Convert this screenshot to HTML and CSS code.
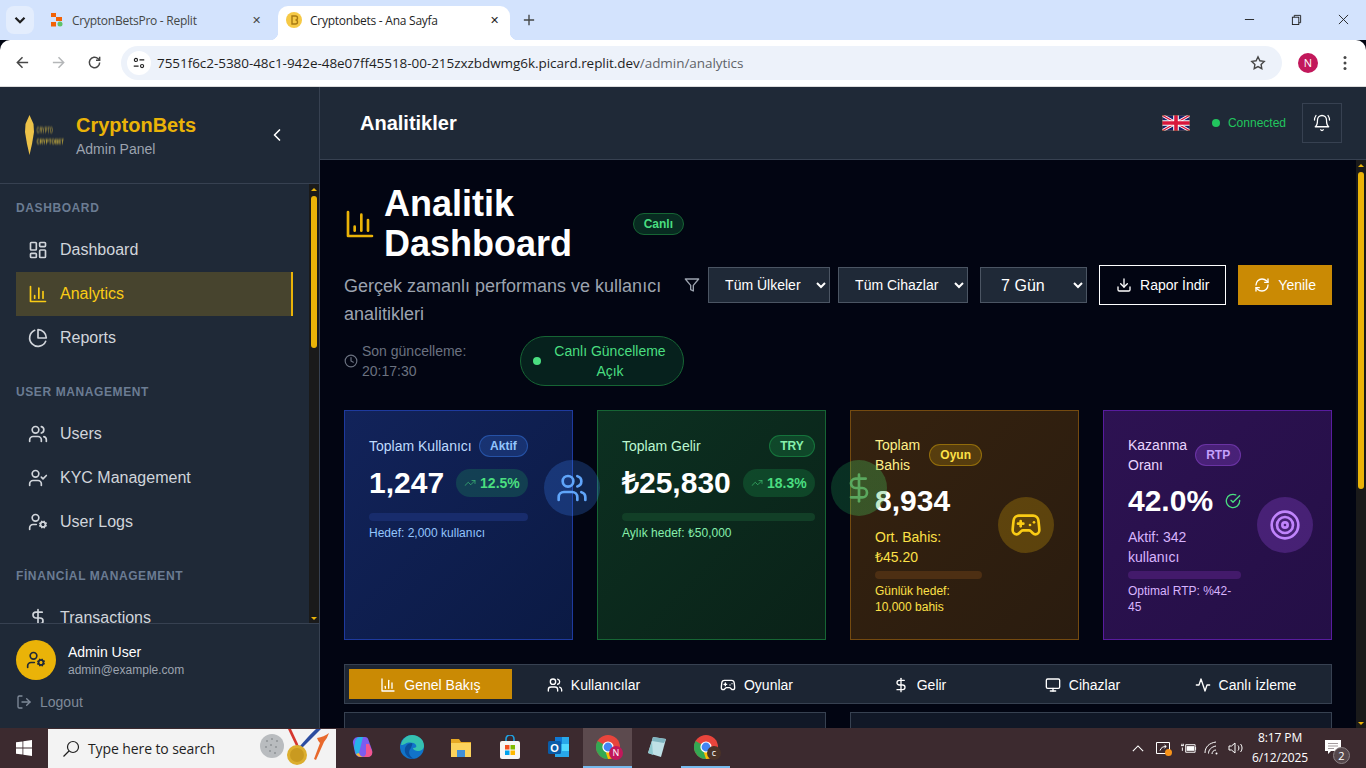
FILE: index.html
```html
<!DOCTYPE html>
<html lang="tr">
<head>
<meta charset="utf-8">
<title>Cryptonbets - Ana Sayfa</title>
<link rel="stylesheet" href="styles.css">
</head>
<body>
<svg class="defs" width="0" height="0" aria-hidden="true">
  <symbol id="i-dashboard" viewBox="0 0 24 24"><rect x="3" y="3" width="7" height="9" rx="1"/><rect x="14" y="3" width="7" height="5" rx="1"/><rect x="14" y="12" width="7" height="9" rx="1"/><rect x="3" y="16" width="7" height="5" rx="1"/></symbol>
  <symbol id="i-bars" viewBox="0 0 24 24"><path d="M3 3v18h18"/><path d="M18 17V9"/><path d="M13 17V5"/><path d="M8 17v-3"/></symbol>
  <symbol id="i-pie" viewBox="0 0 24 24"><path d="M21.21 15.89A10 10 0 1 1 8 2.83"/><path d="M22 12A10 10 0 0 0 12 2v10z"/></symbol>
  <symbol id="i-users" viewBox="0 0 24 24"><path d="M16 21v-2a4 4 0 0 0-4-4H6a4 4 0 0 0-4 4v2"/><circle cx="9" cy="7" r="4"/><path d="M22 21v-2a4 4 0 0 0-3-3.87"/><path d="M16 3.13a4 4 0 0 1 0 7.75"/></symbol>
  <symbol id="i-usercheck" viewBox="0 0 24 24"><path d="M16 21v-2a4 4 0 0 0-4-4H6a4 4 0 0 0-4 4v2"/><circle cx="9" cy="7" r="4"/><path d="m16 11 2 2 4-4"/></symbol>
  <symbol id="i-usercog" viewBox="0 0 24 24"><circle cx="18" cy="15" r="3"/><circle cx="9" cy="7" r="4"/><path d="M10 15H6a4 4 0 0 0-4 4v2"/><path d="m21.7 16.4-.9-.3"/><path d="m15.2 13.9-.9-.3"/><path d="m16.6 18.7.3-.9"/><path d="m19.1 12.2.3-.9"/><path d="m19.6 18.7-.4-1"/><path d="m16.8 12.3-.4-1"/><path d="m14.3 16.6 1-.4"/><path d="m20.7 13.8 1-.4"/></symbol>
  <symbol id="i-dollar" viewBox="0 0 24 24"><path d="M12 2v20"/><path d="M17 5H9.5a3.5 3.5 0 0 0 0 7h5a3.5 3.5 0 0 1 0 7H6"/></symbol>
  <symbol id="i-logout" viewBox="0 0 24 24"><path d="M9 21H5a2 2 0 0 1-2-2V5a2 2 0 0 1 2-2h4"/><path d="m16 17 5-5-5-5"/><path d="M21 12H9"/></symbol>
  <symbol id="i-chevleft" viewBox="0 0 24 24"><path d="m15 18-6-6 6-6"/></symbol>
  <symbol id="i-bell" viewBox="0 0 24 24"><path d="M6 8a6 6 0 0 1 12 0c0 7 3 9 3 9H3s3-2 3-9"/><path d="M10.3 21a1.94 1.94 0 0 0 3.4 0"/><path d="M4 2C2.8 3.7 2 5.7 2 8"/><path d="M22 8c0-2.3-.8-4.3-2-6"/></symbol>
  <symbol id="i-clock" viewBox="0 0 24 24"><circle cx="12" cy="12" r="10"/><path d="M12 6v6l4 2"/></symbol>
  <symbol id="i-filter" viewBox="0 0 24 24"><path d="M22 3H2l8 9.46V19l4 2v-8.54z"/></symbol>
  <symbol id="i-download" viewBox="0 0 24 24"><path d="M21 15v4a2 2 0 0 1-2 2H5a2 2 0 0 1-2-2v-4"/><path d="m7 10 5 5 5-5"/><path d="M12 15V3"/></symbol>
  <symbol id="i-refresh" viewBox="0 0 24 24"><path d="M3 12a9 9 0 0 1 9-9 9.75 9.75 0 0 1 6.74 2.74L21 8"/><path d="M21 3v5h-5"/><path d="M21 12a9 9 0 0 1-9 9 9.75 9.75 0 0 1-6.74-2.74L3 16"/><path d="M8 16H3v5"/></symbol>
  <symbol id="i-trend" viewBox="0 0 24 24"><path d="m22 7-8.5 8.5-5-5L2 17"/><path d="M16 7h6v6"/></symbol>
  <symbol id="i-gamepad" viewBox="0 0 24 24"><path d="M6 11h4"/><path d="M8 9v4"/><path d="M15 12h.01"/><path d="M18 10h.01"/><path d="M17.32 5H6.68a4 4 0 0 0-3.978 3.59c-.006.052-.01.101-.017.152C2.604 9.416 2 14.456 2 16a3 3 0 0 0 3 3c1 0 1.5-.5 2-1l1.414-1.414A2 2 0 0 1 9.828 16h4.344a2 2 0 0 1 1.414.586L17 18c.5.5 1 1 2 1a3 3 0 0 0 3-3c0-1.545-.604-6.584-.685-7.258-.007-.05-.011-.1-.017-.151A4 4 0 0 0 17.32 5z"/></symbol>
  <symbol id="i-target" viewBox="0 0 24 24"><circle cx="12" cy="12" r="10"/><circle cx="12" cy="12" r="6"/><circle cx="12" cy="12" r="2"/></symbol>
  <symbol id="i-check" viewBox="0 0 24 24"><path d="M22 11.08V12a10 10 0 1 1-5.93-9.14"/><path d="m22 4-10 10.01-3-3"/></symbol>
  <symbol id="i-monitor" viewBox="0 0 24 24"><rect x="2" y="3" width="20" height="14" rx="2"/><path d="M8 21h8"/><path d="M12 17v4"/></symbol>
  <symbol id="i-activity" viewBox="0 0 24 24"><path d="M22 12h-4l-3 9L9 3l-3 9H2"/></symbol>
  <symbol id="i-chrome" viewBox="0 0 24 24"><circle cx="12" cy="12" r="12" fill="#e8453c"/><path d="M12 12 1.6 18A12 12 0 0 1 1.6 6z" fill="#34a853"/><path d="M12 24A12 12 0 0 1 1.6 18L7 12h5z" fill="#34a853"/><path d="M12 12h11.4A12 12 0 0 1 12 24l-2-6z" fill="#fbbc04"/><circle cx="12" cy="12" r="5.6" fill="#fff"/><circle cx="12" cy="12" r="4.4" fill="#4285f4"/></symbol>
</svg>

<header class="browser">
  <div class="tabstrip">
    <button class="tab-search"><svg class="ico-chev" viewBox="0 0 12 12"><path d="m3 4.500 3 3 3-3"/></svg></button>
    <div class="tab">
      <svg class="favicon" viewBox="0 0 14 14"><rect x="1" y="0" width="5" height="4" fill="#f26207"/><rect x="6" y="4" width="6" height="4" fill="#f26207"/><rect x="1" y="9" width="5" height="4.500" fill="#f26207"/><circle cx="10" cy="11" r="2.500" fill="#5ec26a"/></svg>
      <span class="tab-title">CryptonBetsPro - Replit</span>
      <span class="tab-close">✕</span>
    </div>
    <div class="tab tab-active">
      <svg class="favicon" viewBox="0 0 16 16"><circle cx="8" cy="8" r="8" fill="#f6c945"/><path d="M6 4h3.500a2 2 0 0 1 0 4 2 2 0 0 1 0 4H6z" fill="none" stroke="#a87a12" stroke-width="1.400"/></svg>
      <span class="tab-title">Cryptonbets - Ana Sayfa</span>
      <span class="tab-close">✕</span>
    </div>
    <svg class="tab-new" viewBox="0 0 14 14"><path d="M7 1v12M1 7h12"/></svg>
    <div class="winctl">
      <svg viewBox="0 0 12 12"><path d="M1 6h10"/></svg>
      <svg viewBox="0 0 12 12"><rect x="1.500" y="3.500" width="7" height="8"/><path d="M3.500 3.500v-2h7v8h-2"/></svg>
      <svg viewBox="0 0 12 12"><path d="m1 1 10 10M11 1 1 11"/></svg>
    </div>
  </div>
  <div class="toolbar">
    <svg class="tb-ico" viewBox="0 0 16 16"><path d="M14 8H2.500M8 2.500 2.500 8 8 13.500"/></svg>
    <svg class="tb-ico tb-off" viewBox="0 0 16 16"><path d="M2 8h11.500M8 2.500 13.500 8 8 13.500"/></svg>
    <svg class="tb-ico" viewBox="0 0 16 16"><path d="M13.500 8a5.500 5.500 0 1 1-1.600-3.900L13.500 5.700"/><path d="M13.500 1.800v3.900H9.600"/></svg>
    <div class="omnibox">
      <span class="site-btn"><svg viewBox="0 0 16 16"><circle cx="4.500" cy="4.500" r="1.800"/><path d="M8.500 4.500H14M2 11.500h5.500"/><circle cx="11.500" cy="11.500" r="1.800"/></svg></span>
      <span class="url">7551f6c2-5380-48c1-942e-48e07ff45518-00-215zxzbdwmg6k.picard.replit.dev<span class="url-path">/admin/analytics</span></span>
      <svg class="star" viewBox="0 0 16 16"><path d="m8 1.800 1.900 4 4.300.6-3.100 3 .7 4.300L8 11.600l-3.800 2.100.7-4.300-3.100-3 4.300-.6z"/></svg>
    </div>
    <span class="profile">N</span>
    <svg class="menu-dots" viewBox="0 0 4 16"><circle cx="2" cy="2.500" r="1.500"/><circle cx="2" cy="8" r="1.500"/><circle cx="2" cy="13.500" r="1.500"/></svg>
  </div>
</header>

<div class="app">
  <aside class="sidebar">
    <div class="side-head">
      <svg class="logo" viewBox="0 0 40 42">
        <defs><filter id="soft" x="-20%" y="-20%" width="140%" height="140%"><feGaussianBlur stdDeviation="0.550"/></filter></defs>
        <path d="M5.500 1 9.500 10 10 18 8 30 5.500 41 3 30 1 18 1.500 10z" fill="#ecc24a" filter="url(#soft)"/>
        <path d="M5.500 6v26" stroke="#a8842a" stroke-width="1" filter="url(#soft)"/>
        <text x="12.500" y="8.600" class="logo-t1" transform="scale(1 2.200)" filter="url(#soft)">CRYPTO</text>
        <text x="12.500" y="18.800" class="logo-t2" transform="scale(1 1.600)" filter="url(#soft)">CRYPTOBETS</text>
      </svg>
      <div class="brand">
        <div class="brand-name">CryptonBets</div>
        <div class="brand-sub">Admin Panel</div>
      </div>
      <svg class="ico collapse"><use href="#i-chevleft"/></svg>
    </div>
    <div class="side-mid">
      <nav class="nav">
        <section class="nav-sec">
          <h3 class="nav-title">Dashboard</h3>
          <a class="nav-item"><svg class="ico"><use href="#i-dashboard"/></svg>Dashboard</a>
          <a class="nav-item nav-active"><svg class="ico"><use href="#i-bars"/></svg>Analytics</a>
          <a class="nav-item"><svg class="ico"><use href="#i-pie"/></svg>Reports</a>
        </section>
        <section class="nav-sec">
          <h3 class="nav-title">User Management</h3>
          <a class="nav-item"><svg class="ico"><use href="#i-users"/></svg>Users</a>
          <a class="nav-item"><svg class="ico"><use href="#i-usercheck"/></svg>KYC Management</a>
          <a class="nav-item"><svg class="ico"><use href="#i-usercog"/></svg>User Logs</a>
        </section>
        <section class="nav-sec">
          <h3 class="nav-title">Fİnancİal Management</h3>
          <a class="nav-item"><svg class="ico"><use href="#i-dollar"/></svg>Transactions</a>
        </section>
      </nav>
      <div class="scrollbar">
        <span class="sb-up"></span>
        <span class="sb-thumb sb-thumb-nav"></span>
        <span class="sb-rest"></span>
        <span class="sb-down"></span>
      </div>
    </div>
    <div class="side-foot">
      <div class="user-row">
        <span class="avatar"><svg class="ico"><use href="#i-usercog"/></svg></span>
        <div>
          <div class="user-name">Admin User</div>
          <div class="user-mail">admin@example.com</div>
        </div>
      </div>
      <a class="logout"><svg class="ico ico-16"><use href="#i-logout"/></svg>Logout</a>
    </div>
  </aside>

  <div class="main">
    <header class="topbar">
      <h2 class="page-title">Analitikler</h2>
      <div class="top-right">
        <svg class="flag" viewBox="0 0 28 16">
          <rect width="28" height="16" fill="#16206a"/>
          <path d="M0 0 28 16M28 0 0 16" stroke="#fff" stroke-width="3"/>
          <path d="M0 0 28 16M28 0 0 16" stroke="#d8163c" stroke-width="1.300"/>
          <path d="M14 0v16M0 8h28" stroke="#fff" stroke-width="5.600"/>
          <path d="M14 0v16M0 8h28" stroke="#d8163c" stroke-width="3.600"/>
          <rect x=".25" y=".25" width="27.500" height="15.500" fill="none" stroke="#6b5a3a" stroke-width=".5"/>
        </svg>
        <span class="conn"><span class="conn-dot"></span>Connected</span>
        <button class="bell-btn"><svg class="ico ico-18"><use href="#i-bell"/></svg></button>
      </div>
    </header>
    <div class="main-body">
      <main class="content">
        <div class="page-head">
          <div class="head-left">
            <div class="title-row">
              <svg class="ico ico-32 c-yellow"><use href="#i-bars"/></svg>
              <h1 class="h1">Analitik Dashboard</h1>
              <span class="pill pill-green">Canlı</span>
            </div>
            <p class="subtitle">Gerçek zamanlı performans ve kullanıcı analitikleri</p>
            <div class="status-row">
              <div class="updated"><svg class="ico ico-14"><use href="#i-clock"/></svg><span>Son güncelleme: 20:17:30</span></div>
              <div class="live"><span class="live-dot"></span><span class="live-text">Canlı Güncelleme Açık</span></div>
            </div>
          </div>
          <div class="controls">
            <div class="filters">
              <svg class="ico ico-16 c-gray"><use href="#i-filter"/></svg>
              <select class="sel sel-country"><option>Tüm Ülkeler</option></select>
              <select class="sel sel-device"><option>Tüm Cihazlar</option></select>
            </div>
            <select class="sel sel-range"><option>7 Gün</option></select>
            <button class="btn btn-outline"><svg class="ico ico-16"><use href="#i-download"/></svg>Rapor İndir</button>
            <button class="btn btn-gold"><svg class="ico ico-16"><use href="#i-refresh"/></svg>Yenile</button>
          </div>
        </div>

        <div class="cards">
          <article class="card card-blue">
            <div class="card-inner">
              <div class="card-main">
                <div class="card-top"><span class="card-label">Toplam Kullanıcı</span><span class="tag">Aktif</span></div>
                <div class="value-row"><span class="value">1,247</span><span class="delta"><svg class="ico ico-12"><use href="#i-trend"/></svg>12.5%</span></div>
                <div class="bar"></div>
                <div class="card-foot">Hedef: 2,000 kullanıcı</div>
              </div>
              <span class="circle"><svg class="ico ico-32"><use href="#i-users"/></svg></span>
            </div>
          </article>
          <article class="card card-green">
            <div class="card-inner">
              <div class="card-main">
                <div class="card-top"><span class="card-label">Toplam Gelir</span><span class="tag">TRY</span></div>
                <div class="value-row"><span class="value">₺25,830</span><span class="delta"><svg class="ico ico-12"><use href="#i-trend"/></svg>18.3%</span></div>
                <div class="bar"></div>
                <div class="card-foot">Aylık hedef: ₺50,000</div>
              </div>
              <span class="circle"><svg class="ico ico-32"><use href="#i-dollar"/></svg></span>
            </div>
          </article>
          <article class="card card-yellow">
            <div class="card-inner">
              <div class="card-main">
                <div class="card-top"><span class="card-label">Toplam Bahis</span><span class="tag">Oyun</span></div>
                <div class="value-row"><span class="value">8,934</span></div>
                <div class="card-sub">Ort. Bahis: ₺45.20</div>
                <div class="bar"></div>
                <div class="card-foot">Günlük hedef: 10,000 bahis</div>
              </div>
              <span class="circle"><svg class="ico ico-32"><use href="#i-gamepad"/></svg></span>
            </div>
          </article>
          <article class="card card-purple">
            <div class="card-inner">
              <div class="card-main">
                <div class="card-top"><span class="card-label">Kazanma Oranı</span><span class="tag">RTP</span></div>
                <div class="value-row"><span class="value">42.0%</span><svg class="ico ico-16 c-green"><use href="#i-check"/></svg></div>
                <div class="card-sub">Aktif: 342 kullanıcı</div>
                <div class="bar"></div>
                <div class="card-foot">Optimal RTP: %42-45</div>
              </div>
              <span class="circle"><svg class="ico ico-32"><use href="#i-target"/></svg></span>
            </div>
          </article>
        </div>

        <div class="tabs">
          <button class="tabbtn tabbtn-on"><svg class="ico ico-16"><use href="#i-bars"/></svg>Genel Bakış</button>
          <button class="tabbtn"><svg class="ico ico-16"><use href="#i-users"/></svg>Kullanıcılar</button>
          <button class="tabbtn"><svg class="ico ico-16"><use href="#i-gamepad"/></svg>Oyunlar</button>
          <button class="tabbtn"><svg class="ico ico-16"><use href="#i-dollar"/></svg>Gelir</button>
          <button class="tabbtn"><svg class="ico ico-16"><use href="#i-monitor"/></svg>Cihazlar</button>
          <button class="tabbtn"><svg class="ico ico-16"><use href="#i-activity"/></svg>Canlı İzleme</button>
        </div>

        <div class="panels">
          <div class="panel"></div>
          <div class="panel"></div>
        </div>
      </main>
      <div class="scrollbar">
        <span class="sb-up"></span>
        <span class="sb-thumb sb-thumb-main"></span>
        <span class="sb-rest"></span>
        <span class="sb-down"></span>
      </div>
    </div>
  </div>
</div>

<footer class="taskbar">
  <div class="start"><svg viewBox="0 0 16 16"><path d="M0 2.300 6.500 1.400v6.200H0zM7.300 1.300 16 0v7.600H7.300zM0 8.400h6.500v6.200L0 13.700zM7.300 8.400H16V16l-8.700-1.300z"/></svg></div>
  <div class="search">
    <svg class="search-ico" viewBox="0 0 18 18"><circle cx="11" cy="7" r="5.500"/><path d="M7 11 1.500 16.500"/></svg>
    <span class="search-text">Type here to search</span>
    <svg class="search-art" viewBox="0 0 76 39">
      <circle cx="12" cy="17" r="12" fill="#b9bcbf"/>
      <g fill="#8f9396"><circle cx="7" cy="12" r="1"/><circle cx="12" cy="10" r="1"/><circle cx="17" cy="12" r="1"/><circle cx="6" cy="18" r="1"/><circle cx="11" cy="16" r="1"/><circle cx="16" cy="18" r="1"/><circle cx="10" cy="22" r="1"/><circle cx="15" cy="24" r="1"/></g>
      <path d="M28 0h5l8 17-4 2z" fill="#d5362e"/><path d="M31 0h3l7 15-2 2z" fill="#f4f4f4"/>
      <path d="M56 0h5L42 19l-4-2z" fill="#2c4da0"/><path d="M52 0h3L40 17l-2-1z" fill="#f4f4f4"/>
      <circle cx="37" cy="26" r="10" fill="#dcae2e"/><circle cx="37" cy="26" r="7" fill="#c99a20"/>
      <path d="M57 9Q64 8 69 4 67 10 64 13L56 31 54 30 60 14Q58 12 57 9z" fill="#e8692c"/>
    </svg>
  </div>
  <div class="apps">
    <span class="app-ico"><svg viewBox="0 0 24 24"><path d="M7 2h7c2 0 3 1 3.500 3L21 15c1 4-1 7-5 7H9c-3 0-4-2-5-4L2 8c-.5-3 2-6 5-6z" fill="#7b5cf0"/><path d="M4 8c0-3 2-6 5-6h3L8 18c-.6 2-2 3-3 1L3 12z" fill="#26b4e8"/><path d="M15 9h3l3 7c1 3-1 6-4 6h-6c2 0 3-1 4-3z" fill="#f2558f"/><path d="M8 18c1 3 3 4 5 4h-3c-2 0-4-1-5-3z" fill="#f6b73c"/></svg></span>
    <span class="app-ico"><svg viewBox="0 0 24 24"><circle cx="12" cy="12" r="12" fill="#1173c9"/><path d="M1 10C2 3 8 0 12 0c6 0 12 4 12 11 0 3-3 5-6 5-2 0-5-1-5-3 3 0 4-1 3-3-2-3-8-3-11-1-2 1-3 1-4 1z" fill="#35c1b0"/><path d="M12 8c-5 0-8 4-7 9 1 4 5 7 9 7-4-2-7-7-3-11 .5-2 2-4 1-5z" fill="#0a4f9e"/></svg></span>
    <span class="app-ico"><svg viewBox="0 0 24 24"><path d="M2 4h8l2 3h10v15H2z" fill="#e6a824"/><path d="M2 8h20v14H2z" fill="#fbd25c"/><path d="M8 15h8v7H8z" fill="#3f8fd8"/></svg></span>
    <span class="app-ico"><svg viewBox="0 0 24 24"><path d="M8 6V4a4 4 0 0 1 8 0v2" fill="none" stroke="#1fa0e0" stroke-width="1.600"/><rect x="2" y="6" width="20" height="18" rx="2" fill="#f6f6f6"/><rect x="7" y="10" width="4.500" height="4.500" fill="#f25022"/><rect x="12.500" y="10" width="4.500" height="4.500" fill="#7fba00"/><rect x="7" y="15.500" width="4.500" height="4.500" fill="#00a4ef"/><rect x="12.500" y="15.500" width="4.500" height="4.500" fill="#ffb900"/></svg></span>
    <span class="app-ico"><svg viewBox="0 0 24 24"><path d="M8 2h14v20H8z" fill="#28a8ea"/><path d="M8 2h7v7H8z" fill="#0f78d4"/><path d="M15 9h7v7h-7z" fill="#50d9ff"/><rect x="1" y="6" width="13" height="13" rx="1.500" fill="#0a5ca8"/><text x="7.500" y="16.500" class="outlook-t">O</text></svg></span>
    <span class="app-ico app-on"><svg viewBox="0 0 24 24"><use href="#i-chrome"/></svg><span class="app-badge app-badge-n">N</span></span>
    <span class="app-ico"><svg viewBox="0 0 24 24"><path d="M8 2 21 4 16 22 3 18z" fill="#bfe0e6"/><path d="M8 2 21 4 19 8 7 6z" fill="#7fb4c0"/><path d="M7 6 3 18l5 2z" fill="#8fc8cf"/></svg></span>
    <span class="app-ico app-run"><svg viewBox="0 0 24 24"><use href="#i-chrome"/></svg><span class="app-badge app-badge-c">c</span></span>
  </div>
  <div class="tray">
    <span class="tray-i"><svg class="t-chev" viewBox="0 0 14 8"><path d="m1 7 6-6 6 6"/></svg></span>
    <span class="tray-i tray-meet"><svg viewBox="0 0 16 16"><path d="M1.500 2.500h13v11h-13z"/><path d="M5 10.500c1-3 3-4 6-4M9.500 5l1.800 1.500L9.500 8"/></svg><span class="orange-dot"></span></span>
    <span class="tray-i"><svg class="t-batt" viewBox="0 0 18 12"><path d="M6 2.500h10v8H6z"/><path d="M16.500 5v3"/><path d="M7 4h8v5H7z" fill="#fff" stroke="none"/><path d="M1 3.500h3M2 1.500v2M3.500 1.500v2M2.500 5.500V9"/></svg></span>
    <span class="tray-i"><svg class="t-wifi" viewBox="0 0 16 14"><path d="M1 12C1 6 5 2 12 1M4.500 12.500C4.500 9 7 6 12 5M8 13c0-2 1.500-4 4-4"/><circle cx="12.500" cy="12.500" r="1" fill="#fff" stroke="none"/></svg></span>
    <span class="tray-i"><svg class="t-sound" viewBox="0 0 16 14"><path d="M1 5v4h2.500L7 12V2L3.500 5zM10 4.500c1.200 1.500 1.200 3.500 0 5M12.500 3c2 2.400 2 5.600 0 8"/></svg></span>
    <span class="clock"><span>8:17 PM</span><span>6/12/2025</span></span>
    <span class="tray-i notif"><svg viewBox="0 0 16 14"><path d="M0 0h16v11H6l-3 3v-3H0z" fill="#fff"/><path d="M3 3.500h10M3 6h10M3 8.500h6" stroke="#8d8386" stroke-width=".8"/></svg><span class="notif-n">2</span></span>
    <span class="show-desk"></span>
  </div>
</footer>
</body>
</html>
```
FILE: styles.css
```css
* { box-sizing: border-box; }
html, body { margin: 0; padding: 0; }
body {
  width: 1366px;
  height: 768px;
  overflow: hidden;
  display: flex;
  flex-direction: column;
  font-family: "Liberation Sans", Arial, sans-serif;
  background: #020512;
  color: #fff;
}
.defs { position: absolute; }
h1, h2, h3, p { margin: 0; }
button { font-family: inherit; }

.ico {
  width: 20px;
  height: 20px;
  flex: none;
  fill: none;
  stroke: currentColor;
  stroke-width: 2;
  stroke-linecap: round;
  stroke-linejoin: round;
}
.ico-12 { width: 12px; height: 12px; }
.ico-14 { width: 14px; height: 14px; }
.ico-16 { width: 16px; height: 16px; }
.ico-18 { width: 18px; height: 18px; stroke-width: 1.700; }
.ico-32 { width: 32px; height: 32px; }
.c-yellow { color: #eab308; }
.c-gray { color: #9ca3af; }
.c-green { color: #4ade80; }

/* browser chrome */
.browser { flex: none; height: 87px; font-family: "Open Sans", "Noto Sans", sans-serif; }
.tabstrip {
  height: 40px;
  background: #d3e3fd;
  display: flex;
  padding: 6px 0 0 6px;
  color: #1f1f1f;
}
.tab-search {
  width: 28px;
  height: 28px;
  border: 0;
  border-radius: 8px;
  background: #e3edfd;
  padding: 5px;
  margin-right: 2px;
  display: flex;
}
.ico-chev { width: 18px; height: 18px; fill: none; stroke: #1f1f1f; stroke-width: 1.500; }
.tab {
  width: 242px;
  height: 34px;
  display: flex;
  align-items: center;
  padding: 0 17px 6px 14px;
  font-size: 12px;
  letter-spacing: -.25px;
  color: #444746;
}
.tab-active {
  width: 232px;
  background: #fff;
  border-radius: 10px 10px 0 0;
  color: #1f1f1f;
  padding: 0 11px 6px 8px;
  position: relative;
}
.tab-active::before,
.tab-active::after {
  content: "";
  position: absolute;
  bottom: 0;
  width: 8px;
  height: 8px;
}
.tab-active::before { left: -8px; background: radial-gradient(circle at 0 0, transparent 8px, #fff 8.500px); }
.tab-active::after { right: -8px; background: radial-gradient(circle at 100% 0, transparent 8px, #fff 8.500px); }
.favicon { width: 14px; height: 14px; flex: none; margin-right: 8px; }
.tab-active .favicon { width: 16px; height: 16px; margin-right: 8px; }
.tab-title { flex: 1; white-space: nowrap; overflow: hidden; }
.tab-close { font-size: 11px; color: #444746; font-family: "DejaVu Sans", sans-serif; }
.tab-active .tab-close { color: #1f1f1f; }
.tab-new { width: 12px; height: 12px; margin: 8px 0 0 13px; fill: none; stroke: #444746; stroke-width: 1.600; flex: none; }
.winctl {
  margin-left: auto;
  display: flex;
  align-items: flex-start;
  gap: 36px;
  padding: 8px 17px 0 0;
}
.winctl svg { width: 11px; height: 11px; fill: none; stroke: #1f1f1f; stroke-width: 1; }
.toolbar {
  height: 47px;
  background: #fff;
  border-bottom: 1px solid #dcdcdc;
  border-radius: 10px 10px 0 0;
  display: flex;
  align-items: center;
  padding: 0 0 1px 15px;
  gap: 21px;
}
.tb-ico { width: 15px; height: 15px; fill: none; stroke: #474747; stroke-width: 1.600; flex: none; }
.tb-off { stroke: #b4b6b8; }
.omnibox {
  width: 1161px;
  height: 34px;
  margin-left: -2px;
  border-radius: 17px;
  background: #edf2fa;
  display: flex;
  align-items: center;
  padding: 0 16px 0 6px;
  margin-right: -5px;
}
.site-btn {
  width: 24px;
  height: 24px;
  border-radius: 50%;
  background: #fff;
  display: flex;
  align-items: center;
  justify-content: center;
  flex: none;
}
.site-btn svg { width: 14px; height: 14px; fill: none; stroke: #1f1f1f; stroke-width: 1.300; }
.url { margin-left: 6px; font-size: 13.500px; color: #1f1f1f; flex: 1; white-space: nowrap; letter-spacing: -.05px; }
.url-path { color: #5f6368; }
.star { width: 16px; height: 16px; fill: none; stroke: #474747; stroke-width: 1.400; flex: none; }
.profile {
  width: 20px;
  height: 20px;
  border-radius: 50%;
  background: #c2185b;
  color: #fff;
  font-size: 11px;
  display: flex;
  align-items: center;
  justify-content: center;
  flex: none;
}
.menu-dots { width: 4px; height: 16px; fill: #474747; flex: none; margin-left: 4px; }

/* app layout */
.app { flex: 1; min-height: 0; display: flex; }
.sidebar {
  width: 320px;
  flex: none;
  display: flex;
  flex-direction: column;
  background: #1f2937;
  border-right: 1px solid #374151;
}
.side-head {
  height: 97px;
  flex: none;
  border-bottom: 1px solid #374151;
  display: flex;
  align-items: center;
  padding: 0 32px 0 24px;
}
.logo { width: 40px; height: 42px; flex: none; margin-right: 12px; }
.logo-t1 { font-size: 4px; font-family: "Liberation Sans", sans-serif; font-weight: 700; fill: #a39040; }
.logo-t2 { font-size: 4.500px; font-family: "Liberation Sans", sans-serif; font-weight: 700; fill: #cbb03e; }
.brand { flex: 1; }
.brand-name { font-size: 20px; line-height: 28px; font-weight: 700; color: #eab308; }
.brand-sub { font-size: 14px; line-height: 20px; color: #9ca3af; }
.collapse { color: #fff; }
.side-mid { flex: 1; min-height: 0; display: flex; }
.nav { flex: 1; min-width: 0; overflow: hidden; padding: 16px 16px 0; }
.nav-sec { margin-bottom: 24px; }
.nav-title {
  font-size: 12px;
  line-height: 16px;
  font-weight: 700;
  text-transform: uppercase;
  letter-spacing: .6px;
  color: #6b7c93;
  margin-bottom: 12px;
}
.nav-item {
  height: 44px;
  display: flex;
  align-items: center;
  gap: 12px;
  padding: 0 12px;
  font-size: 16px;
  color: #d1d5db;
}
.nav-active {
  background: rgba(234, 179, 8, .2);
  border-right: 2px solid #eab308;
  color: #facc15;
}
.scrollbar {
  width: 10px;
  flex: none;
  background: #1a1a1a;
  display: flex;
  flex-direction: column;
  align-items: center;
}
.sb-up, .sb-down {
  flex: none;
  width: 0;
  height: 0;
  border-left: 3px solid transparent;
  border-right: 3px solid transparent;
}
.sb-up { border-bottom: 3px solid #eab308; margin: 4px 0 5px; }
.sb-down { border-top: 3px solid #eab308; margin: 4px 0 3px; }
.sb-thumb { flex: none; width: 6px; background: #eab308; border-radius: 3px; }
.sb-thumb-nav { height: 152px; }
.sb-thumb-main { height: 317px; }
.sb-rest { flex: 1; }
.side-foot { flex: none; height: 105px; border-top: 1px solid #374151; padding: 16px; }
.user-row { display: flex; align-items: center; gap: 12px; }
.avatar {
  width: 40px;
  height: 40px;
  border-radius: 50%;
  background: #eab308;
  color: #1f2937;
  display: flex;
  align-items: center;
  justify-content: center;
  flex: none;
}
.user-name { font-size: 14px; line-height: 20px; color: #fff; }
.user-mail { font-size: 12px; line-height: 16px; color: #9ca3af; }
.logout {
  display: flex;
  align-items: center;
  gap: 8px;
  margin-top: 12px;
  font-size: 14px;
  line-height: 20px;
  color: #7f8a99;
}
.main { flex: 1; min-width: 0; display: flex; flex-direction: column; }
.topbar {
  height: 73px;
  flex: none;
  background: #1f2937;
  border-bottom: 1px solid #374151;
  display: flex;
  align-items: center;
  justify-content: space-between;
  padding: 0 24px 0 40px;
}
.page-title { font-size: 20px; font-weight: 700; }
.top-right { display: flex; align-items: center; }
.flag { width: 28px; height: 16px; margin-right: 22px; }
.conn { display: flex; align-items: center; gap: 8px; font-size: 12px; color: #22c55e; margin-right: 16px; }
.conn-dot { width: 8px; height: 8px; border-radius: 50%; background: #22c55e; }
.bell-btn {
  width: 40px;
  height: 40px;
  border: 1px solid #374151;
  background: transparent;
  color: #fff;
  display: flex;
  align-items: center;
  justify-content: center;
  padding: 0;
}
.main-body { flex: 1; min-height: 0; display: flex; }
.content { flex: 1; min-width: 0; overflow: hidden; padding: 24px 24px 0; }
.page-head { display: flex; align-items: center; justify-content: space-between; margin-bottom: 24px; }
.head-left { width: 340px; flex: none; }
.title-row { display: flex; align-items: center; }
.title-row .ico-32 { margin-right: 8px; }
.h1 { flex: 1; font-size: 36px; line-height: 40px; font-weight: 700; margin-right: 12px; }
.pill {
  flex: none;
  font-size: 12px;
  line-height: 16px;
  font-weight: 700;
  padding: 2px 10px;
  border-radius: 999px;
}
.pill-green { color: #4ade80; background: rgba(34, 197, 94, .2); border: 1px solid #166534; }
.subtitle { font-size: 18px; line-height: 28px; color: #9ca3af; margin-top: 8px; }
.status-row { display: flex; align-items: center; margin-top: 8px; }
.updated {
  flex: 1;
  display: flex;
  align-items: center;
  gap: 4px;
  font-size: 14px;
  line-height: 20px;
  color: #6b7280;
}
.live {
  flex: none;
  width: 164px;
  display: flex;
  align-items: center;
  gap: 8px;
  padding: 4px 12px;
  border: 1px solid #166534;
  border-radius: 25px;
  background: rgba(34, 197, 94, .15);
  color: #4ade80;
  font-size: 14px;
  line-height: 20px;
}
.live-dot { width: 8px; height: 8px; border-radius: 50%; background: #4ade80; flex: none; }
.live-text { flex: 1; text-align: center; }
.controls { display: flex; align-items: center; gap: 12px; }
.filters { display: flex; align-items: center; gap: 8px; }
.sel {
  height: 36px;
  background: #1f2937;
  color: #fff;
  border: 1px solid #4b5563;
  border-radius: 0;
  font-family: inherit;
  font-size: 14px;
  padding: 0 12px;
}
.sel-country { width: 122px; }
.sel-device { width: 130px; }
.sel-range { width: 107px; font-size: 16px; padding: 0 16px; }
.btn {
  height: 40px;
  display: flex;
  align-items: center;
  gap: 8px;
  padding: 0 16px;
  color: #fff;
  font-size: 14px;
  white-space: nowrap;
}
.btn-outline { background: transparent; border: 1px solid #fff; }
.btn-gold { background: #ca8a04; border: 0; }

/* stat cards */
.cards { display: grid; grid-template-columns: repeat(4, 229px); gap: 24px; margin-bottom: 24px; }
.card { border: 1px solid; padding: 24px; min-height: 230px; }
.card-inner { display: flex; align-items: center; gap: 16px; }
.card-main { flex: 1; display: flex; flex-direction: column; }
.card-top { display: flex; align-items: center; justify-content: space-between; gap: 8px; }
.card-label { font-size: 14px; line-height: 20px; }
.card-blue .card-label, .card-green .card-label { white-space: nowrap; }
.tag {
  flex: none;
  font-size: 12px;
  line-height: 16px;
  font-weight: 700;
  padding: 2px 10px;
  border: 1px solid;
  border-radius: 999px;
}
.card-blue .card-top { gap: 7px; }
.value-row { display: flex; align-items: center; gap: 12px; margin: 8px 0; }
.value { font-size: 30px; line-height: 36px; font-weight: 700; color: #fff; white-space: nowrap; }
.card-green .value { min-width: 109px; }
.delta {
  flex: none;
  display: flex;
  align-items: center;
  gap: 4px;
  height: 28px;
  padding: 0 8px;
  border-radius: 999px;
  font-size: 14px;
  font-weight: 700;
  color: #4ade80;
  background: rgba(34, 197, 94, .2);
}
.delta .ico { opacity: .75; stroke-width: 1.500; }
.card-sub { font-size: 14px; line-height: 20px; }
.bar { height: 8px; border-radius: 4px; margin-top: 4px; }
.card-foot { font-size: 12px; line-height: 16px; margin-top: 4px; }
.circle {
  width: 56px;
  height: 56px;
  flex: none;
  border-radius: 50%;
  display: flex;
  align-items: center;
  justify-content: center;
  position: relative;
  z-index: 1;
}
.card-blue { border-color: #1e3a9e; background: linear-gradient(135deg, #12235a, #0b1a44); }
.card-blue .card-label { color: #bfdbfe; }
.card-blue .card-foot { color: #93c5fd; }
.card-blue .tag { color: #93c5fd; background: rgba(59, 130, 246, .2); border-color: rgba(59, 130, 246, .4); }
.card-blue .bar { background: #182c6c; }
.card-blue .circle { background: rgba(59, 130, 246, .25); color: #60a5fa; }
.card-green { border-color: #166534; background: linear-gradient(135deg, #0c3021, #0a2218); }
.card-green .card-label { color: #bbf7d0; }
.card-green .card-foot { color: #86efac; }
.card-green .tag { color: #86efac; background: rgba(34, 197, 94, .2); border-color: rgba(34, 197, 94, .35); }
.card-green .bar { background: #123f27; }
.card-green .circle { background: linear-gradient(90deg, rgba(34, 197, 94, .22) 19px, rgba(70, 190, 90, .33) 19px); color: #5aa85e; }
.card-yellow { border-color: #744a10; background: linear-gradient(135deg, #35220f, #2a1c0f); }
.card-yellow .card-label { color: #fef08a; }
.card-yellow .card-sub { color: #fde047; }
.card-yellow .card-foot { color: #fde047; }
.card-yellow .tag { color: #fde047; background: rgba(234, 179, 8, .2); border-color: rgba(234, 179, 8, .4); }
.card-yellow .bar { background: #4d2f13; }
.card-yellow .circle { background: rgba(234, 179, 8, .25); color: #facc15; }
.card-purple { border-color: #581c9e; background: linear-gradient(135deg, #2d1252, #240f46); }
.card-purple .card-label { color: #e9d5ff; }
.card-purple .card-sub, .card-purple .card-foot { color: #d8b4fe; }
.card-purple .tag { color: #c4a0fc; background: rgba(168, 85, 247, .25); border-color: rgba(168, 85, 247, .35); }
.card-purple .bar { background: #431a6b; }
.card-purple .circle { background: rgba(168, 85, 247, .25); color: #c084fc; }

/* tabs */
.tabs {
  display: grid;
  grid-template-columns: repeat(6, 1fr);
  height: 40px;
  padding: 4px;
  background: #1c2533;
  border: 1px solid #374151;
  margin-bottom: 8px;
}
.tabbtn {
  display: flex;
  align-items: center;
  justify-content: center;
  gap: 8px;
  background: transparent;
  border: 0;
  padding: 1px 0 0;
  color: #fff;
  font-size: 14px;
}
.tabbtn-on { background: #ca8a04; }
.panels { display: grid; grid-template-columns: 1fr 1fr; gap: 24px; }
.panel { height: 320px; background: #111827; border: 1px solid #374151; }

/* taskbar */
.taskbar {
  height: 40px;
  flex: none;
  display: flex;
  background: #3c2a2f;
  color: #fff;
  font-family: "Open Sans", "Noto Sans", sans-serif;
}
.start { width: 48px; display: flex; align-items: center; justify-content: center; }
.start svg { width: 16px; height: 16px; fill: #fff; }
.search {
  width: 288px;
  margin-top: 1px;
  background: #f3f3f3;
  display: flex;
  align-items: center;
  color: #1f1f1f;
  padding-left: 14px;
  overflow: hidden;
}
.search-ico { width: 18px; height: 18px; fill: none; stroke: #1f1f1f; stroke-width: 1.200; flex: none; }
.search-text { margin-left: 8px; font-size: 14px; flex: 1; letter-spacing: -.1px; white-space: nowrap; }
.search-art { width: 76px; height: 39px; flex: none; }
.apps { display: flex; margin-left: 2px; }
.app-ico {
  width: 49px;
  height: 40px;
  display: flex;
  align-items: center;
  justify-content: center;
  position: relative;
  border-bottom: 2px solid transparent;
}
.app-ico svg { width: 24px; height: 24px; }
.app-on { background: #5c4a4e; border-bottom-color: #76b9ed; }
.app-run { border-bottom-color: #76b9ed; }
.outlook-t { font-size: 11px; font-weight: 700; fill: #fff; text-anchor: middle; font-family: "Liberation Sans", sans-serif; }
.app-badge {
  position: absolute;
  left: 26px;
  top: 18px;
  width: 14px;
  height: 14px;
  border-radius: 50%;
  font-size: 9px;
  line-height: 14px;
  text-align: center;
  color: #fff;
}
.app-badge-n { background: #c2185b; }
.app-badge-c { background: #4a3328; }
.tray { margin-left: auto; display: flex; align-items: center; height: 40px; }
.tray-i { width: 24px; height: 40px; display: flex; align-items: center; justify-content: center; position: relative; }
.tray-i svg { fill: none; stroke: #fff; stroke-width: 1; }
.t-chev { width: 12px; height: 7px; }
.tray-i .t-chev { stroke-width: 1.300; }
.tray-meet { width: 26px; }
.tray-meet svg { width: 16px; height: 16px; }
.orange-dot { position: absolute; left: 15px; top: 21px; width: 7px; height: 7px; border-radius: 50%; background: #f7931a; }
.t-batt { width: 17px; height: 12px; }
.t-wifi { width: 16px; height: 14px; }
.t-sound { width: 16px; height: 14px; }
.clock {
  width: 64px;
  display: flex;
  flex-direction: column;
  align-items: center;
  font-size: 12px;
  line-height: 20px;
  white-space: nowrap;
  letter-spacing: -.1px;
}
.notif { width: 42px; }
.notif svg { width: 16px; height: 14px; stroke: none; margin-top: -3px; }
.notif-n {
  position: absolute;
  left: 21px;
  top: 19px;
  width: 17px;
  height: 17px;
  border-radius: 50%;
  background: #55474b;
  border: 1px solid #8d8386;
  font-size: 11px;
  line-height: 15px;
  text-align: center;
}
.show-desk { width: 12px; height: 40px; }
```
